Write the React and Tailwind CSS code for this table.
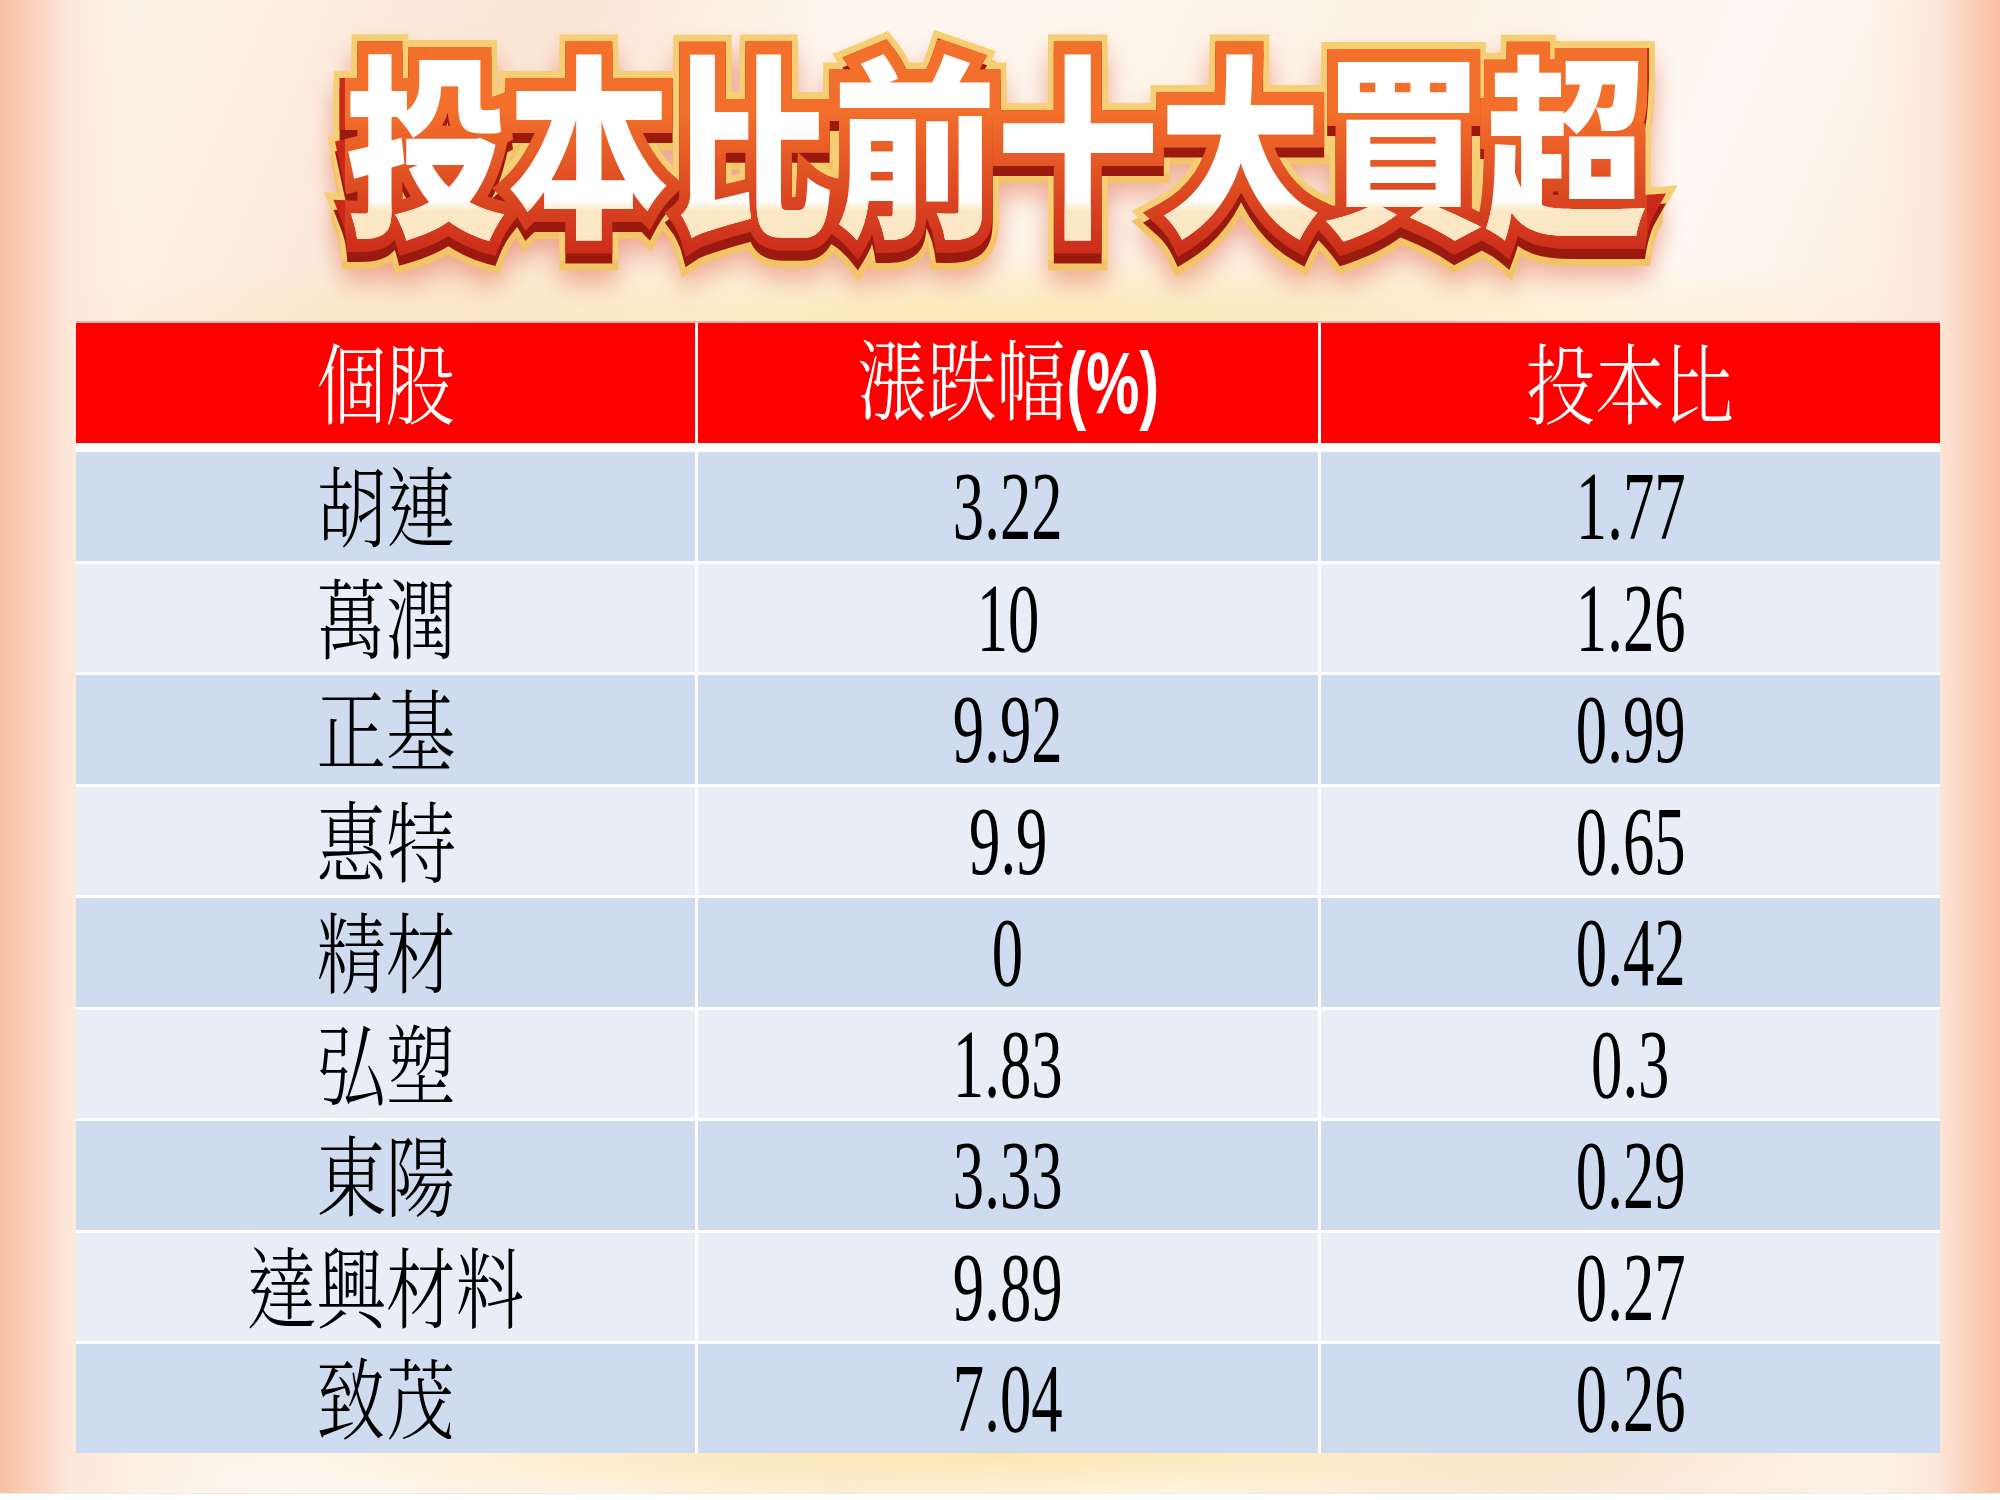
import React from 'react';

const rows = [
  ['胡連', '3.22', '1.77'],
  ['萬潤', '10', '1.26'],
  ['正基', '9.92', '0.99'],
  ['惠特', '9.9', '0.65'],
  ['精材', '0', '0.42'],
  ['弘塑', '1.83', '0.3'],
  ['東陽', '3.33', '0.29'],
  ['達興材料', '9.89', '0.27'],
  ['致茂', '7.04', '0.26'],
];

const TITLE = '投本比前十大買超';
// every layer is positioned so they paint in DOM order
const layer = 'relative col-start-1 row-start-1 whitespace-nowrap';

const CjkText = ({ children, className = '' }) => (
  <span
    className={`inline-block scale-x-[0.79] -translate-y-[4px] text-[88px] leading-none font-light [font-family:Noto_Serif_CJK_TC,Noto_Sans_CJK_TC,serif] ${className}`}
  >
    {children}
  </span>
);

const NumText = ({ children }) => (
  <span className="inline-block scale-x-[0.64] text-[98px] leading-none font-normal text-black [font-family:Liberation_Serif,Times_New_Roman,serif]">
    {children}
  </span>
);

const Title = () => (
  <h1 className="grid scale-x-[0.835] text-[195px] leading-none font-black [font-family:Noto_Sans_CJK_TC,sans-serif]">
    {/* gold rim, dropped */}
    <span className={`${layer} translate-y-[10px] text-[#f3c466] [-webkit-text-stroke:40px_#f3c466] [filter:drop-shadow(0_10px_14px_rgba(214,70,40,0.45))]`}>
      {TITLE}
    </span>
    {/* gold rim */}
    <span className={`${layer} text-[#f6cf74] [-webkit-text-stroke:40px_#f6cf74]`}>{TITLE}</span>
    {/* dark red extrusion */}
    <span className={`${layer} translate-y-[10px] text-[#9a1a0f] [-webkit-text-stroke:26px_#9a1a0f]`}>{TITLE}</span>
    {/* red stroke */}
    <span className={`${layer} text-[#c9281a] [-webkit-text-stroke:26px_#c9281a]`}>{TITLE}</span>
    {/* orange stroke fading downward */}
    <span
      className={`${layer} text-[#f3702c] [-webkit-text-stroke:26px_#f3702c] [mask-image:linear-gradient(to_bottom,black_25%,transparent_80%)] [-webkit-mask-image:linear-gradient(to_bottom,black_25%,transparent_80%)]`}
    >
      {TITLE}
    </span>
    {/* white face */}
    <span className={`${layer} text-white`}>{TITLE}</span>
    {/* cream lower part of the face */}
    <span
      className={`${layer} text-[#fbe7c3] [mask-image:linear-gradient(to_bottom,transparent_57%,black_61%)] [-webkit-mask-image:linear-gradient(to_bottom,transparent_57%,black_61%)]`}
    >
      {TITLE}
    </span>
  </h1>
);

export default function App() {
  return (
    <div className="w-[2000px] h-[1500px] flex flex-col overflow-hidden bg-[linear-gradient(90deg,#f8bfa2_0px,#fbd3be_35px,#fde8db_70px,rgba(253,244,234,0)_130px,rgba(253,244,234,0)_1870px,#fde8db_1935px,#fbd3be_1965px,#f8bfa2_2000px),radial-gradient(ellipse_1000px_70px_at_50%_318px,#fde8b6,rgba(253,232,182,0)),linear-gradient(112deg,#fdf5ec_0%,#fbe6d4_22%,#fef8f1_34%,#fdf1e4_55%,#fef9f3_68%,#fbe7d6_82%,#fdf5ec_100%)]">
      <header className="h-[321px] shrink-0 flex justify-center pt-[40px] pr-[8px]">
        <Title />
      </header>

      <section className="ml-[76px] w-[1864px] bg-white">
        <div className="grid grid-cols-3 gap-x-[3px] border-t-2 border-[#f7b0ad]">
          {['個股', '漲跌幅', '投本比'].map((h, i) => (
            <div key={h} className="h-[120px] bg-[#ff0000] flex items-center justify-center text-white">
              <CjkText>
                {h}
                {i === 1 && (
                  <span className="inline-block -mx-[9px] scale-x-[0.86] font-bold [font-family:Liberation_Sans,Arial,sans-serif]">
                    (%)
                  </span>
                )}
              </CjkText>
            </div>
          ))}
        </div>
        <div className="grid grid-cols-3 gap-x-[3px] gap-y-[3px] pt-[9px]">
          {rows.map((r, idx) => {
            const bg = idx % 2 === 0 ? 'bg-[#cfdbee]' : 'bg-[#e8edf6]';
            return (
              <React.Fragment key={r[0]}>
                <div className={`h-[108.5px] ${bg} flex items-center justify-center text-black`}>
                  <CjkText>{r[0]}</CjkText>
                </div>
                <div className={`h-[108.5px] ${bg} flex items-center justify-center`}>
                  <NumText>{r[1]}</NumText>
                </div>
                <div className={`h-[108.5px] ${bg} flex items-center justify-center`}>
                  <NumText>{r[2]}</NumText>
                </div>
              </React.Fragment>
            );
          })}
        </div>
      </section>

      <div className="flex-1 bg-[radial-gradient(ellipse_800px_60px_at_50%_0%,#fde6b0,rgba(253,230,176,0))]" />
      <div className="h-[7px] shrink-0 bg-white border-t border-[#ecebea]" />
    </div>
  );
}
